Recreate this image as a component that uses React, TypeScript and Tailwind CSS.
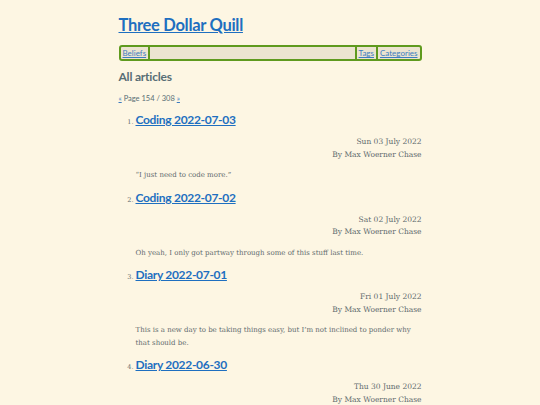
const articles = [
  {
    n: 1,
    title: "Coding 2022-07-03",
    date: "Sun 03 July 2022",
    excerpt: "\u201cI just need to code more.\u201d",
  },
  {
    n: 2,
    title: "Coding 2022-07-02",
    date: "Sat 02 July 2022",
    excerpt: "Oh yeah, I only got partway through some of this stuff last time.",
  },
  {
    n: 3,
    title: "Diary 2022-07-01",
    date: "Fri 01 July 2022",
    excerpt:
      "This is a new day to be taking things easy, but I\u2019m not inclined to ponder why that should be.",
  },
  {
    n: 4,
    title: "Diary 2022-06-30",
    date: "Thu 30 June 2022",
    excerpt: "",
  },
];

const heading = "font-['Lato',sans-serif]";
const serif = "font-['DejaVu_Serif',serif]";

export default function App() {
  return (
    <div className="min-h-[405px] bg-[#fdf6e3] text-[#5f6b6e]">
      <div className="mx-auto w-[303px] pt-[14px]">
        <h1 className={`${heading} text-[16.5px] font-bold leading-[22px] tracking-[-0.3px]`}>
          <a href="#" className="text-[#1e6fc0] underline">
            Three Dollar Quill
          </a>
        </h1>

        <nav className={`${heading} mt-[9px] flex h-[16px] items-center rounded-[3px] border-2 border-[#5f9a1e] bg-[#ece4d0] text-[8px] leading-none`}>
          <a href="#" className="px-[2px] text-[#3d7cc0] underline">Beliefs</a>
          <span className="h-full w-[2px] bg-[#5f9a1e]" />
          <span className="flex-1" />
          <span className="h-full w-[2px] bg-[#5f9a1e]" />
          <a href="#" className="px-[2px] text-[#3d7cc0] underline">Tags</a>
          <span className="h-full w-[2px] bg-[#5f9a1e]" />
          <a href="#" className="px-[2px] text-[#3d7cc0] underline">Categories</a>
        </nav>

        <h2 className={`${heading} mt-[8px] text-[12px] font-bold leading-[16px] tracking-[-0.2px] text-[#586e75]`}>
          All articles
        </h2>

        <p className={`${heading} mt-[9px] text-[7.5px] leading-[10px] text-[#586e75]`}>
          <a href="#" className="text-[#3d7cc0] underline">«</a> Page 154 / 308{" "}
          <a href="#" className="text-[#3d7cc0] underline">»</a>
        </p>

        <ol className="mt-[8px] pl-[17px]">
          {articles.map((a) => (
            <li key={a.n} className="mb-[8px]">
              <div className="flex items-baseline">
                <span className={`${serif} w-0 -translate-x-[2px] text-[6.5px] whitespace-nowrap`}>
                  <span className="inline-block -translate-x-full">{a.n}.</span>
                </span>
                <a href="#" className={`${heading} text-[12px] font-bold leading-[16px] tracking-[-0.3px] text-[#1e6fc0] underline`}>
                  {a.title}
                </a>
              </div>
              <div className={`${serif} mt-[8px] text-right text-[7.5px] leading-[12.5px]`}>
                <div>{a.date}</div>
                <div>By Max Woerner Chase</div>
              </div>
              {a.excerpt && (
                <p className={`${serif} mt-[8px] text-[7px] leading-[12.5px]`}>{a.excerpt}</p>
              )}
            </li>
          ))}
        </ol>
      </div>
    </div>
  );
}
